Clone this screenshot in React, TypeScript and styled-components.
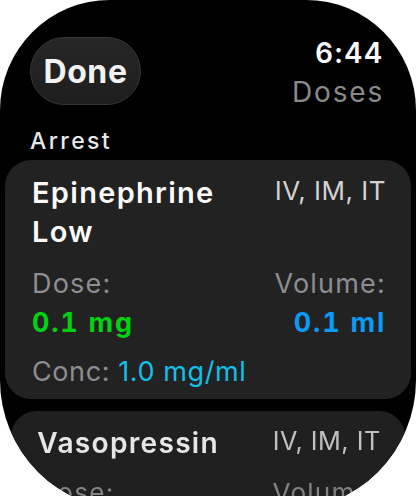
import styled, { createGlobalStyle } from "styled-components";

const GlobalStyle = createGlobalStyle`
    html, body {
        margin: 0;
        padding: 0;
        background: #ffffff;
        overflow: hidden;
    }
    body {
        font-family: Inter, "Noto Sans", "DejaVu Sans", sans-serif;
        -webkit-font-smoothing: antialiased;
    }
`

type Dose = {
    name: string[]
    route: string
    dose: string
    volume: string
    conc: string
}

const doses: Dose[] = [
    { name: ["Epinephrine", "Low"], route: "IV, IM, IT", dose: "0.1 mg", volume: "0.1 ml", conc: "1.0 mg/ml" },
    { name: ["Vasopressin"], route: "IV, IM, IT", dose: "40 units", volume: "2.0 ml", conc: "20 units/ml" },
]

const DoseCard = ({ item, faded }: { item: Dose; faded?: boolean }) => (
    <Card $faded={faded}>
        <TopRow>
            <Name>
                {item.name.map((line) => (
                    <div key={line}>{line}</div>
                ))}
            </Name>
            <Route>{item.route}</Route>
        </TopRow>
        <ValueRow>
            <Column>
                <Label>Dose:</Label>
                <Value $color="#00d312">{item.dose}</Value>
            </Column>
            <Column $right>
                <Label>Volume:</Label>
                <Value $color="#0a9bf7">{item.volume}</Value>
            </Column>
        </ValueRow>
        <Conc>
            Conc: <span>{item.conc}</span>
        </Conc>
    </Card>
)

const App = () => {
    return (
        <>
            <GlobalStyle />
            <Screen>
                <Header>
                    <DoneButton>Done</DoneButton>
                    <TitleBlock>
                        <Time>6:44</Time>
                        <Title>Doses</Title>
                    </TitleBlock>
                </Header>
                <Section>Arrest</Section>
                <List>
                    {doses.map((item, i) => (
                        <DoseCard key={item.name[0]} item={item} faded={i > 0} />
                    ))}
                </List>
            </Screen>
        </>
    )
}

const Screen = styled.div`
    width: 416px;
    height: 510px;
    background: #000;
    border-radius: 110px 110px 130px 130px;
    overflow: hidden;
    display: flex;
    flex-direction: column;
    color: #fff;
`

const Header = styled.div`
    display: flex;
    justify-content: space-between;
    align-items: flex-start;
    padding: 36px 32px 0 30px;
`

const DoneButton = styled.button`
    margin-top: 1px;
    width: 111px;
    height: 68px;
    border-radius: 34px;
    border: 1.5px solid #363636;
    background: linear-gradient(#262626, #1e1e1e);
    color: #f2f2f2;
    font-family: inherit;
    font-size: 32px;
    font-weight: 700;
    letter-spacing: 0.6px;
    display: flex;
    align-items: center;
    justify-content: center;
    padding: 0;
`

const TitleBlock = styled.div`
    display: flex;
    flex-direction: column;
    align-items: flex-end;
    gap: 5px;
`

const Time = styled.div`
    font-size: 28px;
    line-height: 34px;
    font-weight: 600;
    letter-spacing: 1.8px;
    font-variant-numeric: tabular-nums;
    color: #fafafa;
`

const Title = styled.div`
    font-size: 28px;
    line-height: 34px;
    font-weight: 400;
    letter-spacing: 1.8px;
    color: #8a8a8a;
`

const Section = styled.div`
    margin: 18px 0 5px 30px;
    font-size: 23px;
    line-height: 28px;
    font-weight: 500;
    letter-spacing: 2.4px;
    color: #e8e8e8;
`

const List = styled.div`
    display: flex;
    flex-direction: column;
    gap: 12px;
    padding: 0 5px;
`

const Card = styled.div<{ $faded?: boolean }>`
    background: ${(p) => (p.$faded ? "#232323" : "#222222")};
    border-radius: 26px;
    padding: 13px 25px 8px 27px;
    transform: ${(p) => (p.$faded ? "scale(0.97)" : "none")};
    transform-origin: top center;
    filter: ${(p) => (p.$faded ? "blur(0.4px)" : "none")};
    opacity: ${(p) => (p.$faded ? 0.92 : 1)};
`

const TopRow = styled.div`
    display: flex;
    justify-content: space-between;
    align-items: flex-start;
`

const Name = styled.div`
    font-size: 29px;
    line-height: 39px;
    font-weight: 600;
    letter-spacing: 1.3px;
    color: #fafafa;
`

const Route = styled.div`
    font-size: 26px;
    line-height: 36px;
    font-weight: 400;
    letter-spacing: 0.5px;
    color: #d2d2d2;
`

const ValueRow = styled.div`
    display: flex;
    justify-content: space-between;
    margin-top: 13px;
`

const Column = styled.div<{ $right?: boolean }>`
    display: flex;
    flex-direction: column;
    align-items: ${(p) => (p.$right ? "flex-end" : "flex-start")};
`

const Label = styled.div`
    font-size: 27px;
    line-height: 39px;
    font-weight: 400;
    letter-spacing: 1.2px;
    color: #8d8d92;
`

const Value = styled.div<{ $color: string }>`
    font-size: 27px;
    line-height: 39px;
    font-weight: 700;
    letter-spacing: 1.8px;
    font-variant-numeric: tabular-nums;
    color: ${(p) => p.$color};
`

const Conc = styled.div`
    margin-top: 10px;
    font-size: 27px;
    line-height: 39px;
    font-weight: 400;
    letter-spacing: 0.6px;
    color: #8d8d92;

    span {
        color: #12bfe8;
    }
`

export default App;
